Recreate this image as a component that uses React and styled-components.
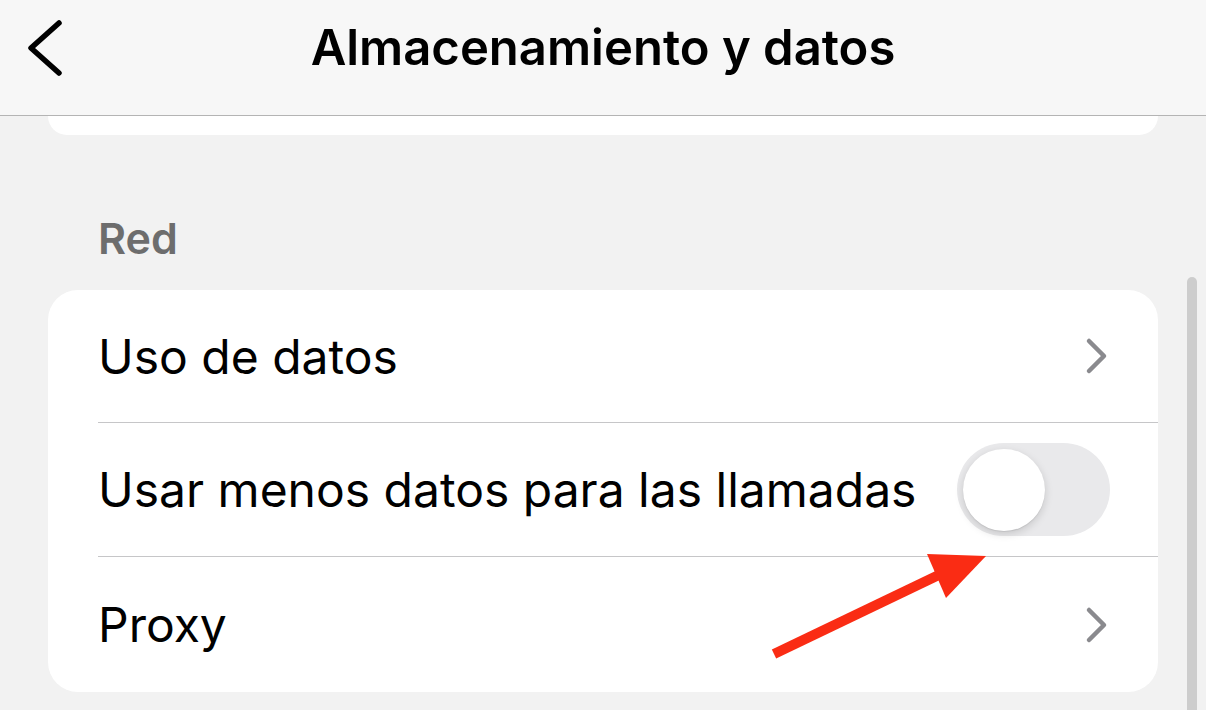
import React from "react";
import styled, { createGlobalStyle } from "styled-components";

const Global = createGlobalStyle`
  html, body { margin: 0; padding: 0; background: #f2f2f2; }
  body { font-family: Inter, "Liberation Sans", sans-serif; -webkit-font-smoothing: antialiased; }
  #root { width: 1206px; height: 710px; overflow: hidden; }
`;

const Screen = styled.div`
  position: relative;
  width: 1206px;
  height: 710px;
  background: #f2f2f2;
  overflow: hidden;
`;

const NavBar = styled.header`
  height: 116px;
  display: grid;
  grid-template-columns: 120px 1fr 120px;
  align-items: center;
  background: #f7f7f7;
  border-bottom: 1px solid #b4b4b4;
  box-sizing: border-box;
`;

const BackButton = styled.div`
  display: flex;
  align-items: center;
  padding-left: 24px;
  padding-bottom: 20px;
`;

const Title = styled.h1`
  margin: 0;
  text-align: center;
  font-size: 49px;
  font-weight: 600;
  color: #000;
  line-height: 1;
  padding-bottom: 20px;
`;

const Content = styled.main`
  padding: 0 48px;
  display: flex;
  flex-direction: column;
`;

const CardTail = styled.div`
  height: 19px;
  background: #fff;
  border-radius: 0 0 28px 28px;
`;

const SectionHeader = styled.h2`
  margin: 82px 0 30px 50px;
  font-size: 43px;
  font-weight: 600;
  color: #6d6d6d;
  line-height: 1;
`;

const Card = styled.section`
  background: #fff;
  border-radius: 30px;
  display: flex;
  flex-direction: column;
`;

const Row = styled.div`
  height: ${(p) => p.$h}px;
  display: flex;
  align-items: center;
  margin-left: 50px;
  padding-right: 48px;
  border-bottom: ${(p) => (p.$last ? "none" : "1px solid #c6c6c8")};
  box-sizing: border-box;
`;

const Label = styled.span`
  flex: 1;
  font-size: 48px;
  color: #000;
  font-weight: 400;
`;

const Toggle = styled.div`
  width: 153px;
  height: 93px;
  border-radius: 47px;
  background: #e9e9eb;
  padding: 6px;
  box-sizing: border-box;
  display: flex;
  align-items: center;
`;

const Knob = styled.div`
  width: 82px;
  height: 82px;
  border-radius: 50%;
  background: #fff;
  box-shadow: 0 3px 8px rgba(0,0,0,0.15), 0 1px 1px rgba(0,0,0,0.08);
`;

const Chevron = () => (
  <svg width="26" height="40" viewBox="0 0 26 40">
    <path d="M5 5 L20 20 L5 35" fill="none" stroke="#8a8a8e" strokeWidth="4.5" strokeLinecap="round" strokeLinejoin="round" />
  </svg>
);

const ScrollBar = styled.div`
  position: absolute;
  left: 1187px;
  top: 277px;
  width: 10px;
  height: 460px;
  border-radius: 5px;
  background: #cdcdcd;
`;

const Overlay = styled.svg`
  position: absolute;
  left: 0;
  top: 0;
  pointer-events: none;
`;

export default function App() {
  return (
    <Screen>
      <Global />
      <NavBar>
        <BackButton>
          <svg width="44" height="60" viewBox="0 0 44 60">
            <path d="M35 5 L7 30 L35 55" fill="none" stroke="#000" strokeWidth="5.5" strokeLinecap="round" strokeLinejoin="round" />
          </svg>
        </BackButton>
        <Title>Almacenamiento y datos</Title>
        <div />
      </NavBar>
      <Content>
        <CardTail />
        <SectionHeader>Red</SectionHeader>
        <Card>
          <Row $h={133}>
            <Label>Uso de datos</Label>
            <Chevron />
          </Row>
          <Row $h={134}>
            <Label>Usar menos datos para las llamadas</Label>
            <Toggle>
              <Knob />
            </Toggle>
          </Row>
          <Row $h={135} $last>
            <Label>Proxy</Label>
            <Chevron />
          </Row>
        </Card>
      </Content>
      <ScrollBar />
      <Overlay width="1206" height="710" viewBox="0 0 1206 710">
        <line x1="774" y1="654" x2="945" y2="572" stroke="#fa2c14" strokeWidth="10" />
        <polygon points="927,554 986,556 946,598" fill="#fa2c14" />
      </Overlay>
    </Screen>
  );
}
